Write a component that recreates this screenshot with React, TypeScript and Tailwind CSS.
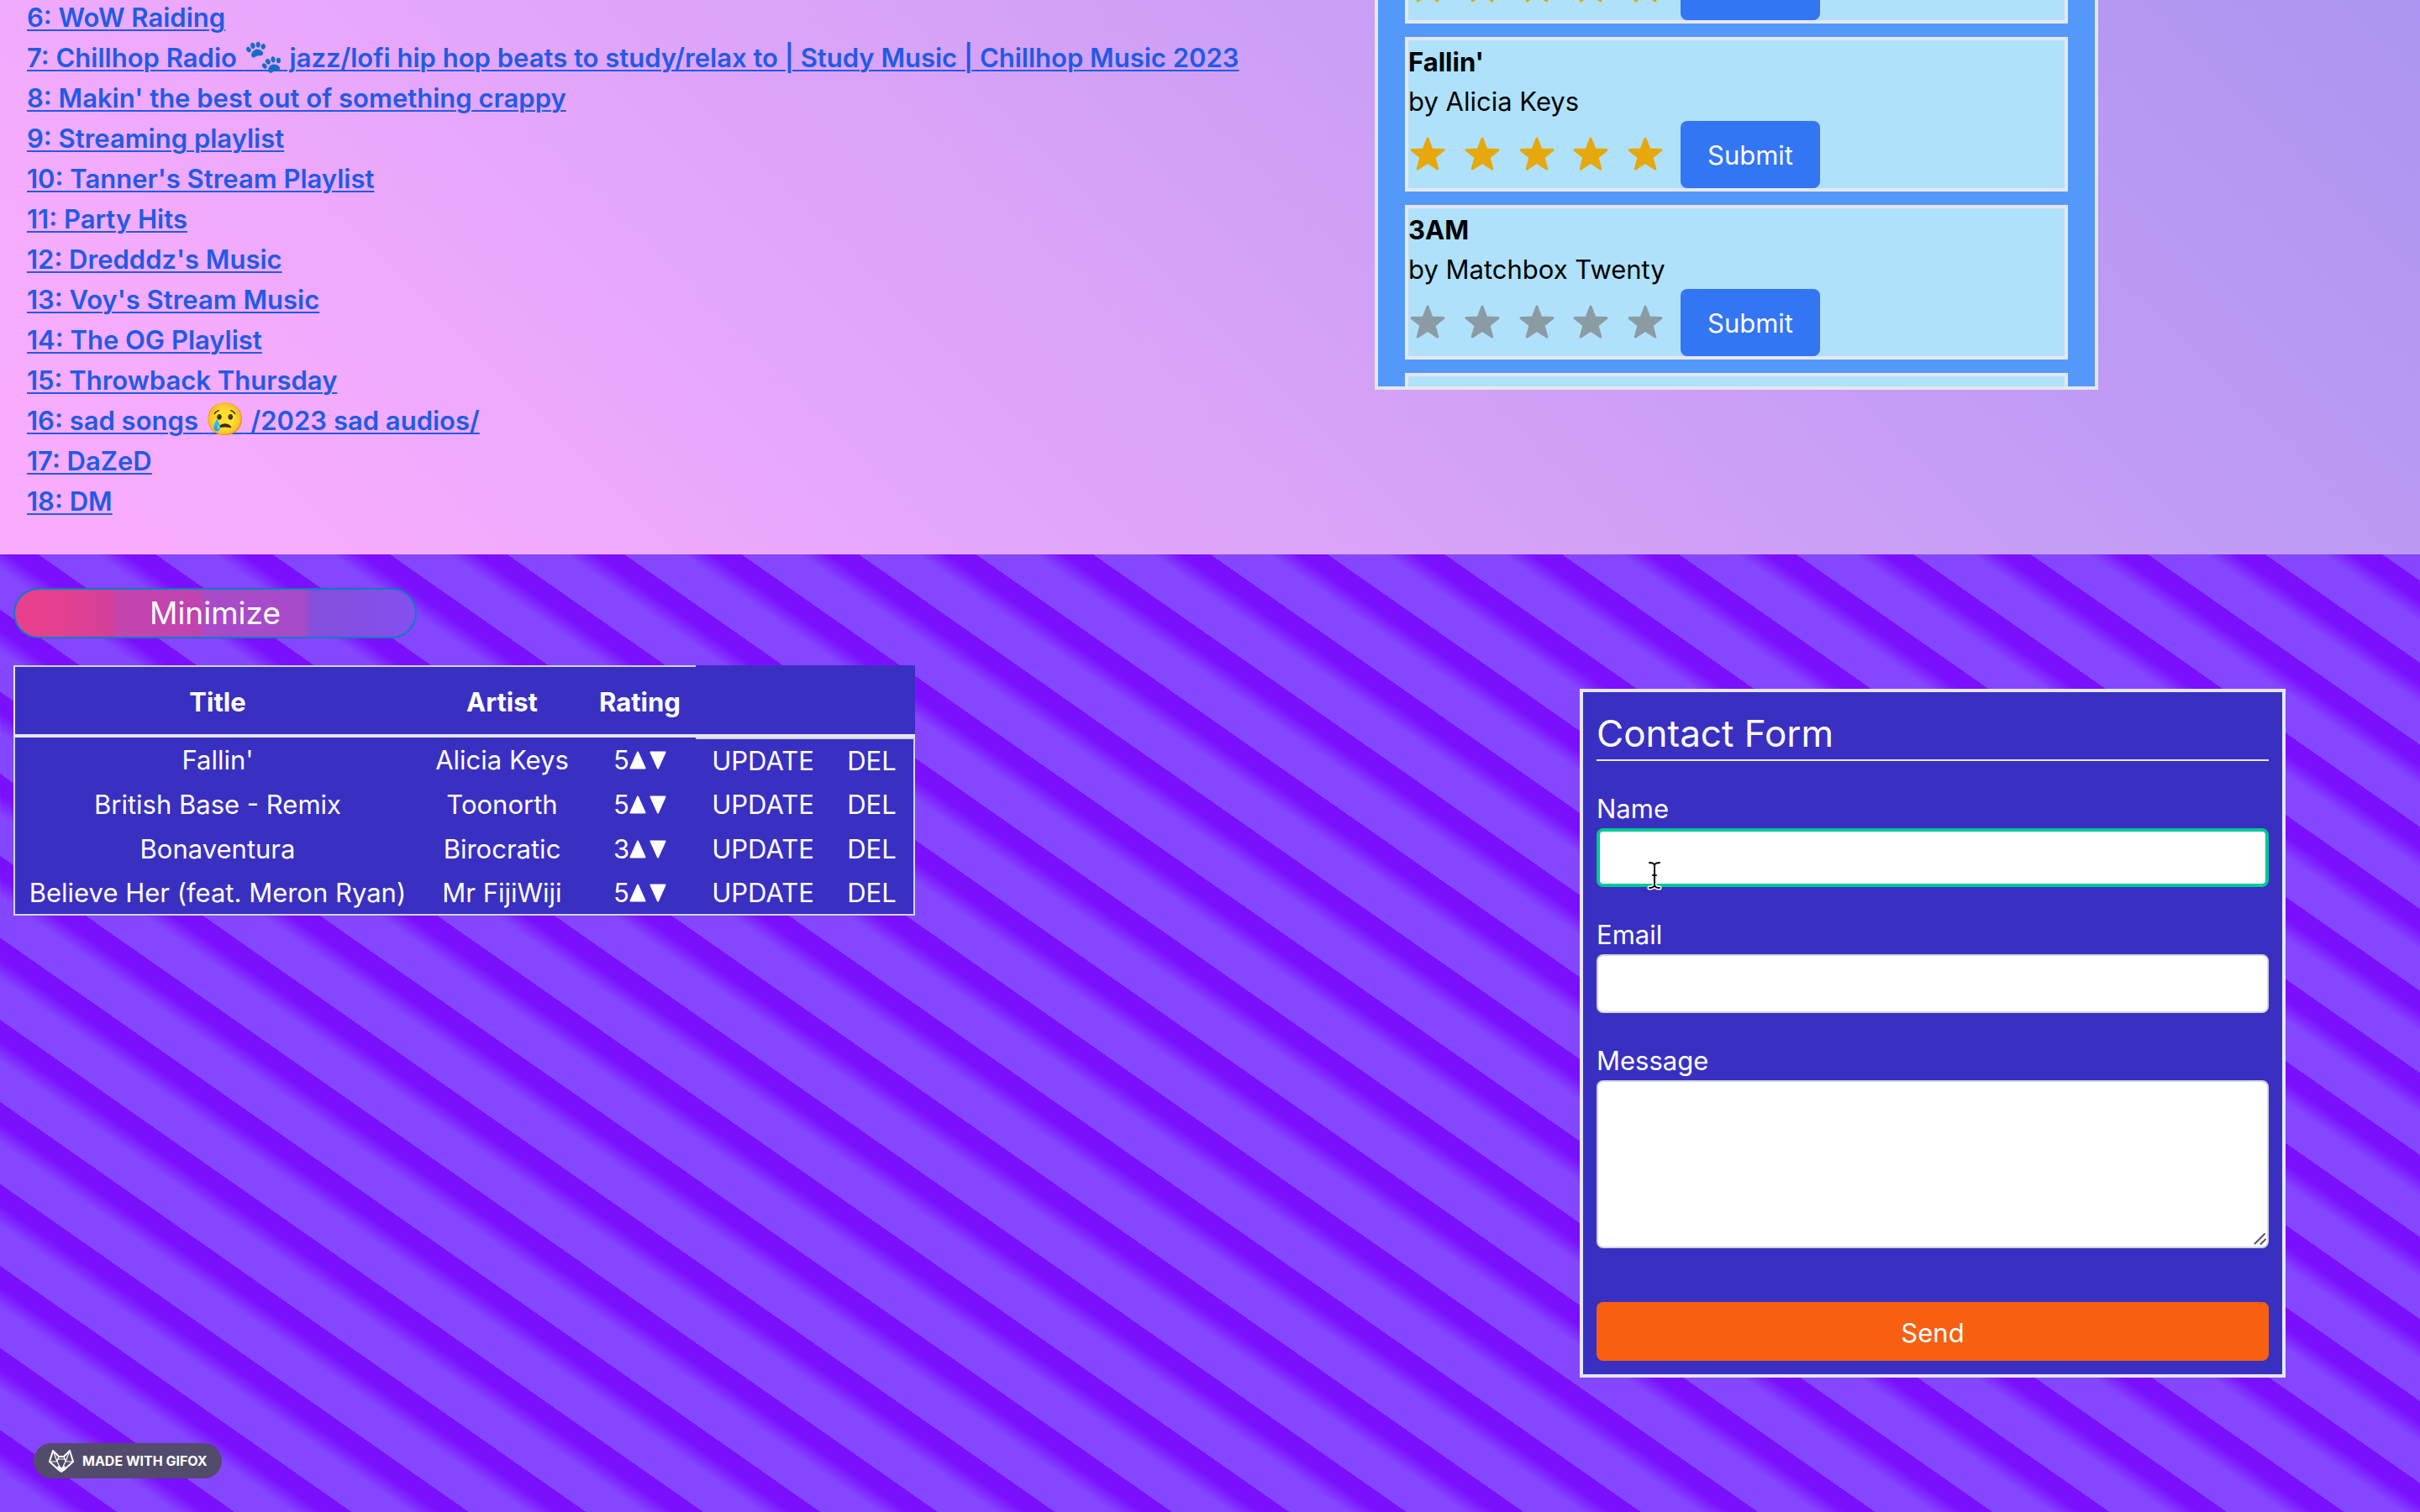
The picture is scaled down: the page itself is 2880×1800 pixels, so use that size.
import React from "react";

const playlists: { name: string; emoji?: string; rest?: string }[] = [
  { name: "6: WoW Raiding" },
  {
    name: "7: Chillhop Radio ",
    emoji: "🐾",
    rest: " jazz/lofi hip hop beats to study/relax to | Study Music | Chillhop Music 2023",
  },
  { name: "8: Makin' the best out of something crappy" },
  { name: "9: Streaming playlist" },
  { name: "10: Tanner's Stream Playlist" },
  { name: "11: Party Hits" },
  { name: "12: Dredddz's Music" },
  { name: "13: Voy's Stream Music" },
  { name: "14: The OG Playlist" },
  { name: "15: Throwback Thursday" },
  { name: "16: sad songs ", emoji: "😢", rest: " /2023 sad audios/" },
  { name: "17: DaZeD" },
  { name: "18: DM" },
];

const ratings = [
  { title: "Fallin'", artist: "Alicia Keys", rating: 5 },
  { title: "British Base - Remix", artist: "Toonorth", rating: 5 },
  { title: "Bonaventura", artist: "Birocratic", rating: 3 },
  { title: "Believe Her (feat. Meron Ryan)", artist: "Mr FijiWiji", rating: 5 },
];

function Star() {
  return (
    <svg viewBox="1 1 48 48" className="size-12" fill="currentColor" stroke="currentColor" strokeWidth="3" strokeLinejoin="round" aria-hidden="true">
      <path d="M24 6 L28.9 19 L43 19.6 L32 28.3 L35.8 42 L24 34.2 L12.2 42 L16 28.3 L5 19.6 L19.1 19 Z" />
    </svg>
  );
}

function RatingRow({ filled }: { filled: boolean }) {
  return (
    <div className="flex items-center">
      <div className={filled ? "flex w-[324px] text-[#e6a80c]" : "flex w-[324px] text-[#8b9ba3]"}>
        {[1, 2, 3, 4, 5].map((n) => (
          <button key={n} type="button" aria-label={`${n} stars`} className="w-[65px]">
            <Star />
          </button>
        ))}
      </div>
      <button type="button" className="h-20 rounded-lg bg-[#3276f4] px-8 leading-none text-white">
        Submit
      </button>
    </div>
  );
}

function TrackCard({ title, artist, filled }: { title?: string; artist?: string; filled: boolean }) {
  return (
    <li className="border-4 border-gray-200 bg-[#b0e1fa] text-black">
      {title && <h3 className="pt-0.5 font-bold">{title}</h3>}
      {artist && <p className="leading-[46px]">by {artist}</p>}
      <RatingRow filled={filled} />
    </li>
  );
}

function Triangle({ down }: { down?: boolean }) {
  return (
    <svg viewBox="0 0 20 22" className="h-[22px] w-5" fill="currentColor" stroke="currentColor" strokeWidth="2" strokeLinejoin="round" aria-hidden="true">
      <path d={down ? "M1.5 1.5 H18.5 L10 20.5 Z" : "M1.5 20.5 H18.5 L10 1.5 Z"} />
    </svg>
  );
}

function FoxLogo() {
  return (
    <svg viewBox="0 0 30 27" className="h-[27px] w-[30px]" fill="none" stroke="#fff" strokeWidth="1.6" strokeLinejoin="round" aria-hidden="true">
      <path d="M5 1 L1 14 L12 24 L15 26 L18 24 L29 14 L25 1 L18 8 H12 Z" strokeWidth="2" />
      <path d="M5 1 L10 14 L15 24 L20 14 L25 1 M1 14 L10 14 L12 8 M29 14 L20 14 L18 8 M10 11 H20" strokeWidth="1.2" />
      <path d="M11 20 L15 22 L19 20 L15 26 Z" fill="#fff" />
    </svg>
  );
}

function TextCursor() {
  return (
    <svg viewBox="0 0 20 36" className="pointer-events-none absolute top-[38px] left-[59px] h-9 w-5" fill="none" strokeLinecap="round" aria-hidden="true">
      <path d="M4 33 Q9 33 10 30 Q11 33 16 33" stroke="#fff" strokeWidth="5" />
      <path d="M4 3 Q9 3 10 6 Q11 3 16 3 M10 6 V30 M8 18 H12 M4 33 Q9 33 10 30 Q11 33 16 33" stroke="#000" strokeWidth="2" />
    </svg>
  );
}

export default function App() {
  return (
    <div className="flex min-h-screen flex-col overflow-hidden font-['Inter',sans-serif] text-[31px] leading-[48px]">
      <section className="flex items-start overflow-hidden bg-[linear-gradient(45deg,#f8acfe_0%,#f6acfe_12%,#ab95f0_100%)]">
        <ul className="-mt-[3px] flex-1 pb-[39px] pl-8 font-semibold text-[#215ae6]">
          {playlists.map((p) => (
            <li key={p.name} className="h-12 whitespace-nowrap">
              <a href="#playlist" className="underline decoration-2 underline-offset-[3px]">
                {p.name}
                {p.emoji && <span className="text-[38px] leading-none">{p.emoji}</span>}
                {p.rest}
              </a>
            </li>
          ))}
        </ul>
        <div className="mr-[383px] h-[464px] w-[861px] shrink-0 overflow-hidden border-4 border-t-0 border-gray-200 bg-[#5499fa] px-8">
          <ul className="-mt-[60px] flex flex-col gap-4">
            <TrackCard filled />
            <TrackCard title="Fallin'" artist="Alicia Keys" filled />
            <TrackCard title="3AM" artist="Matchbox Twenty" filled={false} />
            <li className="h-20 border-4 border-gray-200 bg-[#b0e1fa]" />
          </ul>
        </div>
      </section>

      <section className="relative flex flex-1 items-start justify-between bg-[repeating-linear-gradient(35deg,#8446ff_0px,#8446ff_40px,#7b10ff_60px,#7b10ff_80px)] pr-40 pb-40 pl-4 text-white">
        <div className="pt-10">
          <button
            type="button"
            className="flex h-[60px] w-[480px] items-center justify-center rounded-full border-2 border-[#0e7cc0] bg-[linear-gradient(90deg,#e8408f_0%,#e3408f_12%,#d33f9a_24%,#c444ae_26%,#c044b0_46%,#a84bc9_48%,#a84bc9_72%,#854edb_74%,#8450ee_100%)] text-[37px]"
          >
            Minimize
          </button>
          <table className="mt-8 w-[1073px] table-fixed border-separate border-spacing-0 bg-[#3930c1] text-center">
            <colgroup>
              <col className="w-[484px]" />
              <col className="w-[195px]" />
              <col className="w-[133px]" />
              <col className="w-[160px]" />
              <col className="w-[101px]" />
            </colgroup>
            <thead>
              <tr className="[&>th]:pt-1">
                <th className="h-[86px] border-t-2 border-b-4 border-l-2 border-gray-200 border-t-gray-300 font-bold">Title</th>
                <th className="border-t-2 border-b-4 border-gray-200 border-t-gray-300 font-bold">Artist</th>
                <th className="border-t-2 border-b-4 border-gray-200 border-t-gray-300 font-bold">Rating</th>
                <td className="border-b-4 border-gray-200" />
                <td className="border-b-4 border-gray-200" />
              </tr>
            </thead>
            <tbody className="[&>tr:first-child>td:nth-child(n+4)]:border-t-2 [&>tr:last-child>td]:border-b-2">
              {ratings.map((r) => (
                <tr key={r.title} className="h-[53px]">
                  <td className="border-l-2 border-gray-300 whitespace-nowrap">{r.title}</td>
                  <td className="border-gray-300 whitespace-nowrap">{r.artist}</td>
                  <td className="border-gray-300">
                    <div className="flex items-center justify-center">
                      <span>{r.rating}</span>
                      <button type="button" aria-label="Raise rating">
                        <Triangle />
                      </button>
                      <button type="button" aria-label="Lower rating" className="ml-1">
                        <Triangle down />
                      </button>
                    </div>
                  </td>
                  <td className="border-gray-300">
                    <button type="button">UPDATE</button>
                  </td>
                  <td className="border-r-2 border-gray-300">
                    <button type="button">DEL</button>
                  </td>
                </tr>
              ))}
            </tbody>
          </table>
        </div>

        <form className="mt-40 flex w-[840px] flex-col border-4 border-gray-200 bg-[#3930c1] p-4">
          <h2 className="border-b-2 border-gray-200 pt-0.5 text-[44px] leading-[62px]">Contact Form</h2>
          <label htmlFor="name" className="mt-[34px] leading-[46px]">
            Name
          </label>
          <div className="relative flex">
            <input id="name" type="text" className="h-[70px] w-full rounded-lg border-4 border-[#00c896] bg-white px-6 text-black outline-none" />
            <TextCursor />
          </div>
          <label htmlFor="email" className="mt-[34px] leading-[46px]">
            Email
          </label>
          <input id="email" type="email" className="h-[70px] rounded-lg border-2 border-gray-300 bg-white px-6 text-black" />
          <label htmlFor="message" className="mt-[34px] leading-[46px]">
            Message
          </label>
          <div className="relative flex">
            <textarea id="message" className="h-[200px] w-full resize-none rounded-lg border-2 border-gray-300 bg-white px-6 text-black" />
            <svg viewBox="0 0 16 16" className="pointer-events-none absolute right-[2px] bottom-[3px] size-4" stroke="#555560" strokeWidth="2" strokeLinecap="round" aria-hidden="true">
              <path d="M1.5 13.5 L13 2 M8.5 14 L14 8.5" />
            </svg>
          </div>
          <button type="submit" className="mt-16 h-[70px] rounded-lg bg-[#f95f10] pt-1">
            Send
          </button>
        </form>

        <div className="absolute bottom-10 left-10 flex h-[42px] w-56 items-center gap-2.5 rounded-full bg-[#524b6c] pl-[18px] text-base font-bold whitespace-nowrap">
          <FoxLogo />
          <span>MADE WITH GIFOX</span>
        </div>
      </section>
    </div>
  );
}
